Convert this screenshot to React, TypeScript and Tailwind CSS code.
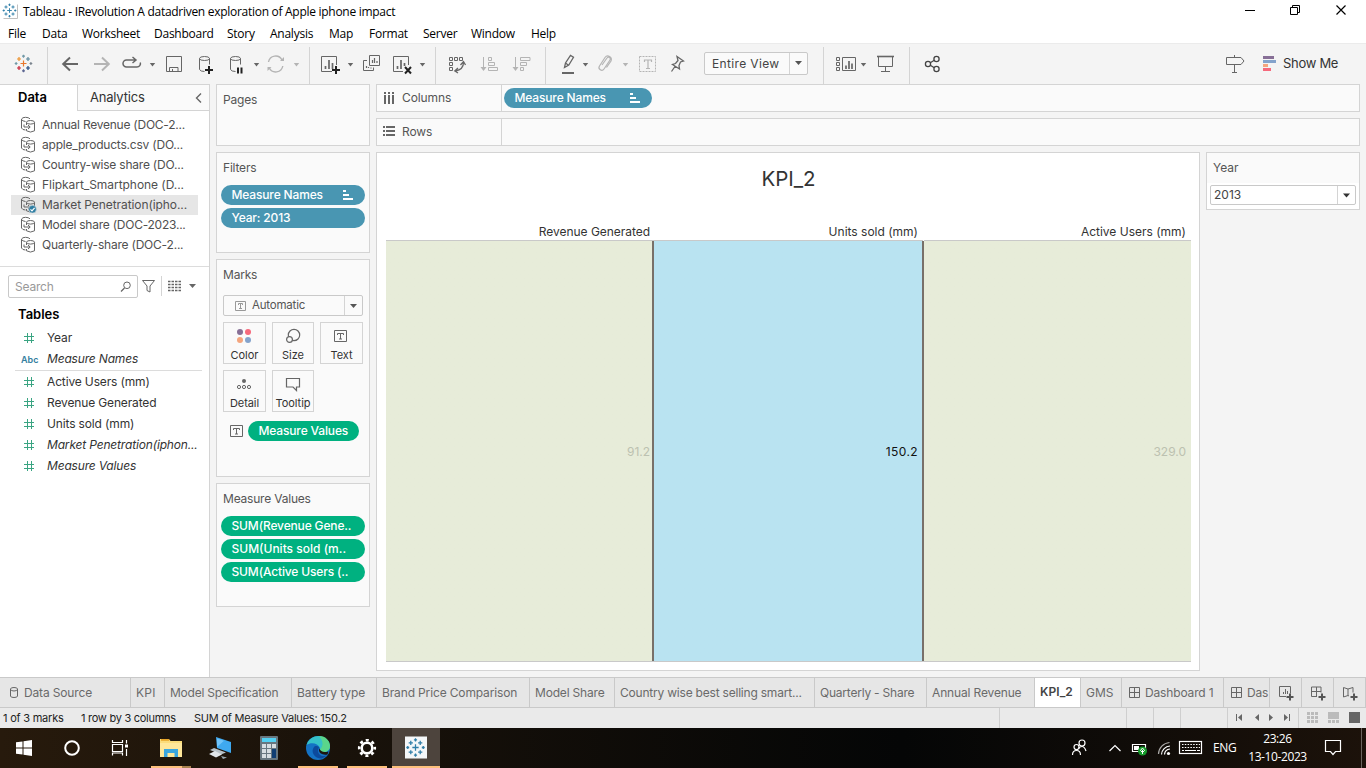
import React from "react";

type IcoProps = { x: number; y: number; w: number; h: number; className?: string; children?: React.ReactNode };

function Ico({ x, y, w, h, className = "", children }: IcoProps) {
  return (
    <svg width={w} height={h} viewBox={`${x} ${y} ${w} ${h}`} fill="none" stroke="#666" strokeWidth="1" className={`block shrink-0 ${className}`}>
      {children}
    </svg>
  );
}

const Sep = () => <div className="w-px h-full shrink-0 bg-[#d4d4d4]" />;
const caret = (x: number, c = "#666") => <path d={`M${x - 2.7} 63h5.4l-2.7 3.4z`} fill={c} stroke="none" />;

function TableauMark({ cx, cy, s, colors }: { cx: number; cy: number; s: number; colors: string[] }) {
  const plus = (x: number, y: number, r: number, c: string, k: number) => (
    <path key={k} d={`M${x - r} ${y}h${2 * r}M${x} ${y - r}v${2 * r}`} stroke={c} strokeWidth={s * 1.2} />
  );
  const u = s;
  return (
    <g>
      {plus(cx, cy, 3 * u, colors[0], 0)}
      {plus(cx - 4.5 * u, cy - 4.5 * u, 2 * u, colors[1], 1)}
      {plus(cx + 4.5 * u, cy - 4.5 * u, 2 * u, colors[2], 2)}
      {plus(cx - 4.5 * u, cy + 4.5 * u, 2 * u, colors[3], 3)}
      {plus(cx + 4.5 * u, cy + 4.5 * u, 2 * u, colors[4], 4)}
      {plus(cx, cy - 7.3 * u, 1.5 * u, colors[5], 5)}
      {plus(cx, cy + 7.3 * u, 1.5 * u, colors[6], 6)}
      {plus(cx - 7.4 * u, cy, 1.4 * u, colors[7], 7)}
      {plus(cx + 7.4 * u, cy, 1.4 * u, colors[8], 8)}
    </g>
  );
}
const blueMark = Array(9).fill("#2f7ea8");

function TitleBar() {
  return (
    <div className="flex h-[23px] items-center font-['Open_Sans',sans-serif] text-[12px] text-black">
      <Ico x={0} y={0} w={23} h={23}>
        <path d="M3.500 18.500h14v-14" stroke="#c0c0c0" />
        <TableauMark cx={9.5} cy={10.5} s={0.78} colors={blueMark} />
      </Ico>
      <span className="flex-1 pt-px tracking-[-0.285px] whitespace-nowrap">Tableau - IRevolution A datadriven exploration of Apple iphone impact</span>
      <Ico x={1228} y={0} w={138} h={23}>
        <g stroke="#000">
          <path d="M1245 10.5h10" />
          <path d="M1290.5 7.5h7v7h-7zM1292.5 7.5v-2h7v7h-2" />
          <path d="M1336.5 5.5l9 9M1345.5 5.5l-9 9" strokeWidth="1.2" />
        </g>
      </Ico>
    </div>
  );
}

const menus: [string, string][] = [
  ["File", "w-[34px]"], ["Data", "w-[40px]"], ["Worksheet", "w-[72px]"], ["Dashboard", "w-[73px]"], ["Story", "w-[43px]"],
  ["Analysis", "w-[59px]"], ["Map", "w-[40px]"], ["Format", "w-[54px]"], ["Server", "w-[48px]"], ["Window", "w-[60px]"], ["Help", "w-[40px]"],
];

function MenuBar() {
  return (
    <div className="flex h-[20px] items-center pt-[2px] pl-[8px] font-['Open_Sans',sans-serif] text-[12px] tracking-[-0.25px] text-black">
      {menus.map(([m, w]) => <span key={m} className={`${w} leading-[18px]`}>{m}</span>)}
    </div>
  );
}

function Toolbar() {
  return (
    <div className="flex h-[41px] w-full border-t border-[#ebebeb] bg-[#f4f4f4]">
      <Ico x={0} y={44} w={47} h={40}>
        <TableauMark cx={23.5} cy={63.5} s={1} colors={["#e8762d", "#eb912c", "#5b879b", "#c72035", "#1f457e", "#7199a6", "#5c6692", "#7199a6", "#7b848e"]} />
      </Ico>
      <div className="mt-[3px]"><Sep /></div>
      <Ico x={48} y={44} w={261} h={40}>
        <path d="M78 64H64M70 57.5L63.2 64L70 70.5" strokeWidth="2" />
        <path d="M94 64h14M102 57.5L108.800 64L102 70.5" strokeWidth="2" stroke="#b4b4b4" />
        <path d="M135 60h-8.500a3.500 3.500 0 0 0 0 7h10.500a3.500 3.500 0 0 0 3.300-4.500M132.500 57l3.500 3l-3.500 3" strokeWidth="1.500" />
        {caret(152.500)}
        <path d="M166.500 56.500h15v15h-15zM169.500 71.500v-4h8.500v4M172.500 71v-2" />
        <ellipse cx="204.500" cy="58.500" rx="5" ry="2" /><path d="M199.500 58.500v11q1 2 5 2M209.500 58.500v6" />
        <path d="M205 70h8M209 66v8" stroke="#222" strokeWidth="2" />
        <ellipse cx="235.500" cy="58.500" rx="5" ry="2" /><path d="M230.500 58.500v11q1 2 5 2M240.500 58.500v6" />
        <path d="M238 67.500v6M241.500 67.500v6" stroke="#222" strokeWidth="2" />
        {caret(256.500)}
        <g stroke="#b4b4b4" strokeWidth="1.400"><path d="M268.500 62a7.200 7.200 0 0 1 13.500-2M282.800 66a7.200 7.200 0 0 1-13.500 2" /><path d="M280 61h4v-4zM271.500 67h-4v4z" fill="#b4b4b4" stroke="none" /></g>
        {caret(296.500, "#b4b4b4")}
      </Ico>
      <div className="mt-[3px]"><Sep /></div>
      <Ico x={310} y={44} w={125} h={40}>
        <path d="M332 71.500h-10.500v-15h15v8.500" />
        <path d="M325.500 66v3M329 60v9M332.500 63v6" strokeWidth="1.700" />
        <path d="M332 70h8M336 66v8" stroke="#222" strokeWidth="2" />
        {caret(350.500)}
        <path d="M369.500 55.500h10v10h-10zM367 60.500h-3.500v10h10v-3" /><path d="M372.500 60v3M374.500 58v5M377 61v2M366.500 66v2M368.500 67v1M371 67.500v1" strokeWidth="1.200" />
        <path d="M403 71.500h-9.500v-15h15v8.500" /><path d="M397.500 66v3M401 60v9M404.500 63v3" strokeWidth="1.700" />
        <path d="M405 67l6 6.500M411 67l-6 6.500" stroke="#222" strokeWidth="2" />
        {caret(422.500)}
      </Ico>
      <div className="mt-[3px]"><Sep /></div>
      <Ico x={436} y={44} w={109} h={40}>
        <path d="M449.500 57.500h3v3h-3zM454.500 57.500h3v3h-3zM459.500 57.500h3v3h-3zM449.500 62.500h3v3h-3zM449.500 67.500h3v3h-3z" />
        <path d="M464 63q0 7-8 8.500M461 65.500l3-3.500l2 3.500M458.500 68.500l-3.200 3l3.200 2" transform="translate(-.5 -.5)" strokeWidth="1.300" />
        <g stroke="#b4b4b4"><path d="M483.500 57v13" /><path d="M480.500 67h6l-3 4z" fill="#b4b4b4" stroke="none" /><path d="M488.500 57.500h3v3h-3zM488.500 62.500h6v3h-6zM488.500 67.500h9v3h-9z" /></g>
        <g stroke="#b4b4b4"><path d="M515.500 57v13" /><path d="M512.500 67h6l-3 4z" fill="#b4b4b4" stroke="none" /><path d="M520.500 57.500h9.500v3h-9.500zM520.500 62.500h6v3h-6zM520.500 67.500h3v3h-3z" /></g>
      </Ico>
      <div className="mt-[3px]"><Sep /></div>
      <Ico x={546} y={44} w={158} h={40}>
        <path d="M564.500 67.500l1-4.500l5-7.500l3 1.800l-4.700 7.700zM565.500 63l3.300 2.500" strokeWidth="1.300" /><path d="M562 73h12" strokeWidth="2" />
        {caret(585.500)}
        <path d="M602 65l5-7a1.800 1.800 0 0 1 3 2l-6 9a2.700 2.700 0 0 1-4.500-3l5.500-8.500a3.500 3.500 0 0 1 6 3.500l-4.500 6.500" stroke="#b4b4b4" strokeWidth="1.200" />
        {caret(625.500, "#b4b4b4")}
        <path d="M639.500 56.500h16v15h-16z" stroke="#b4b4b4" strokeDasharray="2 1" />
        <path d="M644.500 62v-2h7v2M648 60v8M646 68.500h4" stroke="#b4b4b4" strokeWidth="1.200" />
        <path d="M677 56.500l6.500 4.500l-3 1l-1.500 3.500l.5 3.500l-7-4.500l3-1l2.500-3zM675 66.500l-3.500 5" strokeWidth="1.300" />
      </Ico>
      <div className="mt-[8px] flex h-[23px] w-[104px] shrink-0 items-center rounded-[2px] border border-[#c9c9c9] bg-[#fafafa] text-[12px] text-[#444]">
        <span className="w-[84px] pl-[7px] tracking-[0.35px] whitespace-nowrap">Entire View</span>
        <Sep />
        <Ico x={790} y={54} w={17} h={21}><path d="M795 62h7l-3.500 4z" fill="#555" stroke="none" /></Ico>
      </div>
      <Ico x={808} y={44} w={15} h={40} />
      <div className="mt-[3px]"><Sep /></div>
      <Ico x={824} y={44} w={85} h={40}>
        <path d="M836.500 57.500h3v3h-3zM836.500 62.500h3v3h-3zM836.500 67.500h3v3h-3zM842.500 57.500h13v13h-13z" />
        <path d="M846 65.500v3.500M849 61v8M852 63.500v5.500" strokeWidth="1.700" />
        {caret(863.500)}
        <path d="M877 56.500h17" strokeWidth="1.600" /><path d="M878.500 57v9.500h14v-9.500M885.500 66.500v5M881 71.500h9" />
      </Ico>
      <div className="mt-[3px]"><Sep /></div>
      <Ico x={910} y={44} w={366} h={40} className="mr-[7px]">
        <g stroke="#444" strokeWidth="1.300"><circle cx="928" cy="64" r="2.600" /><circle cx="936.500" cy="59" r="2.600" /><circle cx="936.500" cy="69" r="2.600" /><path d="M930.300 62.700l4-2.400M930.300 65.300l4 2.400" /></g>
        <path d="M1226.500 57.500h14.500l3 3.500l-3 3.500h-14.500zM1234.500 55v2.500M1234.500 64.500v8M1232 72.500h5" />
        <g stroke="none"><path d="M1263 56h11v3h-11z" fill="#876f96" /><path d="M1263 60h14v3h-14z" fill="#84a3cc" /><path d="M1263 64h5v3h-5z" fill="#f4a57e" /><path d="M1263 68h8v3h-8z" fill="#f6697c" /></g>
      </Ico>
      <span className="text-[13px] leading-[38px] tracking-[-0.3px] whitespace-nowrap text-[#333]">Show Me</span>
    </div>
  );
}

const sources: [string, string][] = [
  ["Annual Revenue (DOC-2...", "tracking-[-0.24px]"], ["apple_products.csv (DO...", "tracking-[-0.21px]"], ["Country-wise share (DO...", "tracking-[-0.21px]"],
  ["Flipkart_Smartphone (D...", "tracking-[-0.05px]"], ["Market Penetration(ipho...", "tracking-[-0.08px]"], ["Model share (DOC-2023...", "tracking-[-0.24px]"], ["Quarterly-share (DOC-2...", "tracking-[-0.21px]"],
];

function SourceIcon({ on }: { on: boolean }) {
  return (
    <Ico x={0} y={0} w={19} h={20}>
      <path d="M1.500 4v9q1 2 4 2M1.500 4q1-1.700 4-1.700t4.500 1.500M1.500 4.500q1 1.700 4 2" />
      <ellipse cx="10.500" cy="7.300" rx="4" ry="1.800" />
      <path d="M6.500 7.500v2.500M6.500 14v1.800q4 2.500 8 0v-8.300M4 9.500v2.500h6M8 10l2.200 2l-2.200 2" />
      {on && <g><circle cx="12.500" cy="14.200" r="3.900" fill="#2f7ea3" stroke="#e6e6e6" strokeWidth=".6" /><path d="M10.500 14.300l1.500 1.500l2.600-3" stroke="#fff" strokeWidth="1.200" /></g>}
    </Ico>
  );
}

const Hash = () => (
  <Ico x={0} y={0} w={27} h={16}><path d="M7.500 3v10M11.500 3v10M4 6.500h10M4 10.500h10" stroke="#3aa482" /></Ico>
);

function Field({ name, italic = false, abc = false }: { name: string; italic?: boolean; abc?: boolean }) {
  return (
    <div className="flex h-[21px] items-center pl-[20px]">
      {abc ? <span className="w-[27px] pl-[1px] pt-[2px] text-[9px] font-semibold text-[#35809f]">Abc</span> : <Hash />}
      <span className={italic ? "tracking-[-0.17px] whitespace-nowrap italic" : "tracking-[-0.14px] whitespace-nowrap"}>{name}</span>
    </div>
  );
}

function DataPane() {
  return (
    <div className="flex w-[210px] shrink-0 flex-col border-t border-r border-[#d4d4d4] bg-white text-[12px] text-[#333]">
      <div className="flex h-[26px] text-[13px]">
        <div className="w-[77px] pl-[18px] leading-[25px] font-semibold text-black">Data</div>
        <div className="flex flex-1 items-center border-b border-l border-[#d4d4d4] bg-[#fafafa]">
          <span className="flex-1 pl-[12px] tracking-[-0.2px]">Analytics</span>
          <Ico x={190} y={87} w={19} h={20}><path d="M201 92.500l-4.500 4.500l4.500 4.500" strokeWidth="1.400" /></Ico>
        </div>
      </div>
      <div className="h-[156px] border-b border-[#dcdcdc] pt-[4px] pr-[11px] pl-[11px] text-[#505050]">
        {sources.map(([s, tracking], i) => (
          <div key={s} className={`flex h-[20px] items-center pl-[9px] ${i === 4 ? "bg-[#e6e6e6]" : ""}`}>
            <SourceIcon on={i === 4} />
            <span className={`pl-[3px] whitespace-nowrap ${tracking}`}>{s}</span>
          </div>
        ))}
      </div>
      <div className="mt-[8px] flex h-[23px] items-center pl-[8px]">
        <div className="flex h-[23px] w-[130px] items-center rounded-[2px] border border-[#c9c9c9] text-[#999]">
          <span className="flex-1 pl-[6px] tracking-[-0.2px]">Search</span>
          <Ico x={119} y={277} w={18} h={20}><circle cx="127" cy="285.300" r="3.300" /><path d="M124.500 288l-3.500 3.500" strokeWidth="1.300" /></Ico>
        </div>
        <Ico x={138} y={276} w={70} h={22}>
          <path d="M142.500 280.500h12l-4.500 5.500v6l-3-1.500v-4.500z" />
          <path d="M161.500 276v20" stroke="#d4d4d4" />
          <path d="M168 281.500h13M168 284.500h13M168 287.500h13M168 290.500h13" strokeWidth="1.300" strokeDasharray="2.500 1" />
          <path d="M189 284h7l-3.500 4z" fill="#666" stroke="none" />
        </Ico>
      </div>
      <div className="mt-[6px] pl-[18px] text-[13px] leading-[20px] font-semibold text-black">Tables</div>
      <div className="pt-[3px]">
        <Field name="Year" />
        <Field name="Measure Names" italic abc />
        <div className="mr-[7px] ml-[15px] mt-px h-px bg-[#dcdcdc]" />
        <Field name="Active Users (mm)" />
        <Field name="Revenue Generated" />
        <Field name="Units sold (mm)" />
        <Field name="Market Penetration(iphon..." italic />
        <Field name="Measure Values" italic />
      </div>
    </div>
  );
}

function Pill({ text, green = false, sorted = false, tight = true, className = "w-[144px]" }: { text: string; green?: boolean; sorted?: boolean; tight?: boolean; className?: string }) {
  return (
    <div className={`flex h-[20px] shrink-0 items-center rounded-full pl-[10.500px] text-[12px] font-medium text-white ${green ? "bg-[#00b180]" : "bg-[#4996b2]"} ${className}`}>
      <span className={`flex-1 whitespace-nowrap ${tight ? "tracking-[-0.15px]" : ""}`}>{text}</span>
      {sorted && <Ico x={0} y={0} w={24} h={20}><path d="M2 6h3M2 10h6M2 14h10" stroke="#fff" strokeWidth="2" /></Ico>}
    </div>
  );
}

function Card({ title, className, children }: { title: string; className: string; children?: React.ReactNode }) {
  return (
    <div className={`border border-[#d4d4d4] bg-[#fafafa] text-[12px] text-[#555] ${className}`}>
      <div className="h-[30px] pl-[6px] leading-[30px] tracking-[-0.2px] whitespace-nowrap">{title}</div>
      {children}
    </div>
  );
}

const TBox = ({ c = "#666" }: { c?: string }) => (
  <Ico x={0} y={0} w={13} h={12}><path d="M.5 .5h12v11h-12z" stroke={c} /><path d="M3.500 5v-1.500h6v1.500M6.500 3.500v5.500M5 9h3" stroke={c} /></Ico>
);

function MarkButton({ label, className, children }: { label: string; className: string; children: React.ReactNode }) {
  return (
    <div className={`flex h-[42px] flex-col items-center border border-[#d4d4d4] bg-[#fafafa] text-[11px] text-[#333] ${className}`}>
      <div className="flex h-[26px] items-center">{children}</div>
      <span className="leading-[13px] tracking-[-0.05px]">{label}</span>
    </div>
  );
}

function Cards() {
  return (
    <div className="ml-[6px] flex w-[154px] shrink-0 flex-col gap-[6px]">
      <Card title="Pages" className="h-[62px]" />
      <Card title="Filters" className="h-[101px]">
        <div className="flex flex-col gap-[3px] px-[4px] pt-[2px]"><Pill text="Measure Names" sorted /><Pill text="Year: 2013" /></div>
      </Card>
      <Card title="Marks" className="h-[218px]">
        <div className="mx-[6px] mt-[5px] flex h-[21px] items-center rounded-[2px] border border-[#c9c9c9] text-[11.500px]">
          <div className="flex w-[120px] items-center gap-[6px] pl-[11px]">
            <Ico x={0} y={0} w={11} h={12}><path d="M.5 1.500h10v9h-10z" stroke="#999" /><path d="M3.500 5v-1.500h4v1.500M5.500 3.500v5M4 8.500h3" stroke="#999" /></Ico>
            <span className="pt-px tracking-[-0.2px]">Automatic</span>
          </div>
          <Sep />
          <Ico x={345} y={296} w={17} h={19}><path d="M350 304h7l-3.500 4z" fill="#555" stroke="none" /></Ico>
        </div>
        <div className="mt-[6px] flex flex-wrap gap-y-[6px] pl-[6px]">
          <MarkButton label="Color" className="mr-[6px] w-[43px]">
            <Ico x={0} y={0} w={17} h={16}><g stroke="none"><circle cx="4" cy="4" r="3" fill="#876f96" /><circle cx="12" cy="4" r="3" fill="#f6697c" /><circle cx="4" cy="12" r="3" fill="#f4a57e" /><circle cx="12" cy="12" r="3" fill="#84a3cc" /></g></Ico>
          </MarkButton>
          <MarkButton label="Size" className="mr-[6px] w-[42px]">
            <Ico x={0} y={0} w={16} h={16}><circle cx="9" cy="7" r="5.700" strokeWidth="1.200" /><circle cx="4.500" cy="11.500" r="2.900" fill="#fafafa" strokeWidth="1.200" /></Ico>
          </MarkButton>
          <MarkButton label="Text" className="mr-[5px] w-[43px]"><div className="pr-[2px]"><TBox /></div></MarkButton>
          <MarkButton label="Detail" className="mr-[6px] w-[43px]">
            <Ico x={0} y={0} w={17} h={16}><circle cx="8" cy="5" r="2" fill="#666" stroke="none" /><circle cx="3" cy="11" r="1.600" /><circle cx="8" cy="11" r="1.600" /><circle cx="13" cy="11" r="1.600" /></Ico>
          </MarkButton>
          <MarkButton label="Tooltip" className="w-[42px]">
            <Ico x={0} y={0} w={16} h={16}><path d="M1.500 2.500h13v8.500h-3v3.500l-3.500-3.500h-6.500z" strokeWidth="1.200" /></Ico>
          </MarkButton>
        </div>
        <div className="mt-[9px] flex items-center gap-[5px] pl-[13px]"><TBox /><Pill text="Measure Values" green className="w-[111px]" /></div>
      </Card>
      <Card title="Measure Values" className="h-[124px]">
        <div className="flex flex-col gap-[3px] px-[4px] pt-[2px]"><Pill green text="SUM(Revenue Gene.." /><Pill green tight={false} text="SUM(Units sold (m.." /><Pill green text="SUM(Active Users (.." /></div>
      </Card>
    </div>
  );
}

function Shelf({ label, icon, children }: { label: string; icon: React.ReactNode; children?: React.ReactNode }) {
  return (
    <div className="flex h-[28px] shrink-0 items-center border border-[#d4d4d4] bg-[#fafafa] text-[12px] text-[#555]">
      <div className="flex w-[124px] items-center pl-[6px]">{icon}<span className="pl-[6px] tracking-[-0.1px]">{label}</span></div>
      <Sep />
      {children}
    </div>
  );
}

function Pane({ title, value, className }: { title: string; value: string; className: string }) {
  return (
    <div className={`flex flex-col text-right ${className}`}>
      <div className="h-[18px] leading-[20px] text-[#333]">{title}</div>
      <div className="-mr-[5px] h-px bg-[#c9c9c9]" />
      <div className="flex-1 pt-[201px] leading-[20px]">{value}</div>
    </div>
  );
}

function Worksheet() {
  return (
    <div className="mt-[6px] flex h-[519px] w-[824px] flex-col border border-[#d4d4d4] bg-white pl-[9px] text-[12px]">
      <div className="h-[69px] pt-[9px] pr-[8px] text-center text-[20.500px] leading-[33px] text-[#333]">KPI_2</div>
      <div className="grid h-[440px] w-[805px] grid-cols-[266px_2px_268px_2px_267px] overflow-hidden border-b border-[#c9c9c9]">
        <Pane title="Revenue Generated" value="91.2" className="bg-linear-to-b from-white from-[18px] to-[#e7ecd9] to-[18px] pr-[2px] tracking-[-0.04px] text-[#bcc1b0]" />
        <div className="mt-[19px] bg-[#787069]" />
        <Pane title="Units sold (mm)" value="150.2" className="bg-linear-to-b from-white from-[18px] to-[#b9e3f1] to-[18px] pr-[4px] text-[#111] [&>div:last-child]:tracking-[0.4px]" />
        <div className="mt-[19px] bg-[#787069]" />
        <Pane title="Active Users (mm)" value="329.0" className="bg-linear-to-b from-white from-[18px] to-[#e7ecd9] to-[18px] pr-[5px] text-[#bcc1b0]" />
      </div>
    </div>
  );
}

function Main() {
  return (
    <div className="flex h-[593px] bg-[#f4f4f4]">
      <DataPane />
      <Cards />
      <div className="ml-[6px] flex w-[984px] flex-col">
        <Shelf label="Columns" icon={<Ico x={0} y={0} w={13} h={14}><path d="M2 1v2M6 1v2M10 1v2M2 4v9M6 4v9M10 4v9" strokeWidth="2" /></Ico>}>
          <Pill text="Measure Names" sorted className="ml-[2px] w-[148px]" />
        </Shelf>
        <div className="h-[6px] shrink-0" />
        <Shelf label="Rows" icon={<Ico x={0} y={0} w={13} h={14}><path d="M0 2h2M0 6h2M0 10h2M3 2h9M3 6h9M3 10h9" strokeWidth="2" /></Ico>} />
        <div className="flex justify-between">
          <Worksheet />
          <div className="mt-[6px] h-[58px] w-[154px] border border-[#d4d4d4] bg-white text-[12px] text-[#555]">
            <div className="h-[30px] bg-[#fafafa] pl-[6px] leading-[30px]">Year</div>
            <div className="mx-[3px] mt-[2px] flex h-[20px] items-center rounded-[2px] border border-[#c9c9c9] text-[#444]">
              <span className="w-[127px] pl-[3px]">2013</span>
              <Sep />
              <Ico x={0} y={0} w={17} h={18}><path d="M5 7.500h7l-3.500 4z" fill="#333" stroke="none" /></Ico>
            </div>
          </div>
        </div>
      </div>
    </div>
  );
}

const sheets: [string, string][] = [
  ["KPI", "w-[34px] tracking-[0.2px]"], ["Model Specification", "w-[127px] tracking-[-0.22px]"], ["Battery type", "w-[85px] tracking-[-0.08px]"], ["Brand Price Comparison", "w-[153px] tracking-[-0.14px]"],
  ["Model Share", "w-[85px] tracking-[-0.18px]"], ["Country wise best selling smart...", "w-[200px] tracking-[-0.21px]"], ["Quarterly - Share", "w-[112px] tracking-[-0.22px]"],
  ["Annual Revenue", "w-[108px] tracking-[-0.15px]"], ["KPI_2", "w-[46px] bg-white font-semibold leading-[27px] text-[#444]"], ["GMS", "w-[41px]"],
];
const Dash = () => <Ico x={0} y={0} w={11} h={12}><path d="M.5 .5h10v10h-10zM5.500 .5v10M.5 5.500h10" /></Ico>;

function SheetTabs() {
  return (
    <div className="flex h-[31px] border-t border-b border-[#c9c9c9] bg-[#e6e6e6] text-[12px] leading-[29px] text-[#6a6a6a]">
      <div className="flex w-[131px] items-center border-r border-[#c9c9c9] pl-[9px]">
        <Ico x={0} y={0} w={10} h={14}><path d="M1.500 3q0-1.500 3.500-1.500t3.500 1.500v7q0 1.500-3.500 1.500t-3.500-1.500zM1.500 3.500q1 1.500 3.500 1.500t3.500-1.500" /></Ico>
        <span className="pl-[5px] tracking-[-0.15px]">Data Source</span>
      </div>
      {sheets.map(([s, style]) => (
        <div key={s} className={`shrink-0 overflow-hidden border-r border-[#c9c9c9] pl-[5px] whitespace-nowrap ${style}`}>{s}</div>
      ))}
      <div className="flex w-[102px] shrink-0 items-center gap-[5px] border-r border-[#c9c9c9] pl-[7px]"><Dash /><span className="tracking-[-0.15px] whitespace-nowrap">Dashboard 1</span></div>
      <div className="flex w-[46px] shrink-0 items-center gap-[5px] overflow-hidden border-r border-[#c9c9c9] pl-[7px]"><Dash /><span className="tracking-[-0.15px]">Das</span></div>
      <Ico x={1270} y={678} w={96} h={29}>
        <path d="M1301.500 678v29M1333.500 678v29M1365.500 678v29" stroke="#c9c9c9" />
        <path d="M1286 696.500h-6.500v-10h11v7M1283.500 692v2M1285.500 689v5M1287.500 691v3" />
        <path d="M1317 696.500h-5.500v-9.500h9.500v5.500M1316.500 687v9.500M1311.500 691.500h9.500" />
        <path d="M1349 696l-1-.5l-4.500 1.500v-9.500l4.500 1.500l5-1.500v5M1348 689v6.500" />
        <path d="M1286.500 697h7M1290 693.500v7M1318.500 697h7M1322 693.500v7M1350.500 697h7M1354 693.500v7" stroke="#555" strokeWidth="2" />
      </Ico>
    </div>
  );
}

function StatusBar() {
  return (
    <div className="flex h-[20px] bg-[#eaeaea] pl-[3px] text-[11px] leading-[20px] tracking-[-0.22px] text-[#222]">
      <span className="w-[78px] whitespace-nowrap">1 of 3 marks</span>
      <span className="w-[113px] tracking-[-0.27px] whitespace-nowrap">1 row by 3 columns</span>
      <span className="flex-1">SUM of Measure Values: 150.2</span>
      <Ico x={990} y={708} w={376} h={20}>
        <path d="M999.500 708v20M1126.500 708v20M1153.500 708v20M1180.500 708v20M1227.500 708v20M1298.500 708v20" stroke="#cfcfcf" />
        <g fill="#666" stroke="none">
          <path d="M1236 714h1v7h-1zM1242 714v7l-4-3.500zM1259 714v7l-4-3.500zM1269 714v7l4-3.500zM1284 714v7l4-3.500zM1289 714h1v7h-1z" />
          <path d="M1349 712h11v11h-11z" />
          {[0, 1, 2].map((r) => [0, 1, 2].map((c) => <rect key={`${r}${c}`} x={1307 + c * 4} y={712 + r * 4} width="3" height="3" fill="#bbb" />))}
          <path d="M1328 712h11v7h-11zM1328 720h3v3h-3zM1332 720h3v3h-3zM1336 720h3v3h-3z" fill="#bbb" />
        </g>
      </Ico>
    </div>
  );
}

function Taskbar() {
  return (
    <div className="flex h-[40px] bg-linear-to-r from-[#271a0c] via-[#050606] via-66% to-[#1c120a] font-['Open_Sans',sans-serif] text-[12px] text-white">
      <Ico x={0} y={728} w={1060} h={40}>
        <path d="M392 728h48v40h-48z" fill="#4d443d" stroke="none" />
        <path d="M16 742.300l6.500-.9v6.100h-6.500zM23.500 741.200l8.500-1.200v7.500h-8.500zM16 748.500h6.500v6.100l-6.500-.9zM23.500 748.500h8.500v7.500l-8.500-1.200z" fill="#fff" stroke="none" />
        <circle cx="72" cy="748" r="6.800" stroke="#fff" strokeWidth="2" />
        <g stroke="#fff" strokeWidth="1.200"><path d="M112.500 744.500h10v7h-10zM112.500 740v2.500h10v-2.500M112.500 755.500v-2.500h10v2.500M126.500 740v3.500M126.500 749v7" /><path d="M125 744.500h3v3h-3z" fill="#fff" stroke="none" /></g>
        <g stroke="none">
          <path d="M160 739h9l1.500 2h11.500v16h-22z" fill="#fbdc7b" /><path d="M161 739h8v1.800h-8z" fill="#e9a72b" /><path d="M160 743h22v14h-22z" fill="#ffe79a" /><path d="M164 749h14v8h-3.500v-4h-7v4h-3.500z" fill="#3aa6df" />
          <path d="M216 737l15 5v11l-14-5z" fill="#3fa9f0" /><path d="M217 738.500l7 2.300l-7 6.200z" fill="#70c4fa" /><path d="M214 748l12 4.500l-5 2l-11-4.500z" fill="#b8c2c8" /><path d="M209 754l6-3l7 3.500l-6 3z" fill="#e1e6ea" /><path d="M221 756l6 1.500l-4 1.500z" fill="#9aa7ae" />
          <rect x="260" y="736" width="18" height="24" rx="1" fill="#687780" /><path d="M262 738h14v4h-14z" fill="#53d0f2" /><path d="M262 744h4v4h-4zM267 744h4v4h-4zM272 744h4v4h-4zM262 749h4v4h-4zM267 749h4v4h-4zM262 754h4v4h-4zM267 754h4v4h-4z" fill="#d6dde1" /><path d="M272 749h4v9h-4z" fill="#103e73" />
          <circle cx="318" cy="748" r="12" fill="#1472c4" /><path d="M306.500 745c2-6 7-9 12-9c7 0 11.500 5 11.500 10c0 4-3 6-6.500 6c-4 0-3.500-2-3.500-4c-2-5-9-6-13.500-3z" fill="#35c1c9" /><path d="M319 736c7 0 11 5 11 10c0 4-3 6-6.500 6c-3 0-3.800-1-3.500-2.500c4-4 3-9-1-13.500z" fill="#67dc76" opacity=".75" /><path d="M314 747c-4 5 1 12 8 11.500l5-3c-5 1.500-9-.5-9-5c0-1 .5-2 1-3c-1-2-4-2-5-.5z" fill="#0c4a9c" />
          <path d="M319.500 748.500c1 3 4 4.500 9 3l-1 3c-5 1-9-1.500-8.500-5z" fill="#1d1610" />
        </g>
        <circle cx="367" cy="748" r="5.300" stroke="#fff" strokeWidth="2.600" /><circle cx="367" cy="748" r="7.800" stroke="#fff" strokeWidth="2.600" strokeDasharray="3 3.126" strokeDashoffset="1.500" />
        <rect x="405" y="736.500" width="22" height="22" fill="#f4f7f9" stroke="none" /><TableauMark cx={415.500} cy={747.500} s={1.050} colors={blueMark} />
        <path d="M151 766h31v2h-31zM298 766h40v2h-40zM347 766h40v2h-40zM392 766h48v2h-48z" fill="#fdc07c" stroke="none" /><path d="M182 766h9v2h-9z" fill="#a9824f" stroke="none" />
      </Ico>
      <Ico x={1060} y={728} w={150} h={40}>
        <g stroke="#fff" strokeWidth="1.200">
          <circle cx="1076.500" cy="747" r="2.500" /><path d="M1072.500 755q0-4.500 4-4.500t4 4.500" /><circle cx="1082" cy="743" r="3" /><path d="M1078.500 749q1-2.500 3.500-2.500t4 4.500" />
          <path d="M1109.500 751l5.500-5.500l5.500 5.500" />
          <path d="M1132.500 744.500h13v7h-13z" /><path d="M1134 746h5v4h-5z" fill="#fff" stroke="none" /><circle cx="1142.500" cy="751" r="4.500" fill="#169b2b" stroke="none" /><path d="M1142.500 748l2 2.500l-2 2l-2-2zM1142.500 750v4" strokeWidth="1" />
          <path d="M1158.500 754a12 12 0 0 1 11-11.500" opacity=".65" /><path d="M1161.500 754.500a9 9 0 0 1 8.500-8.500M1164.500 754.500a6 6 0 0 1 5.500-5.500" /><circle cx="1168.500" cy="753.500" r="1.600" fill="#fff" stroke="none" />
          <rect x="1179.500" y="741.500" width="22" height="12" /><path d="M1182 744.500h18M1182 747.500h18" strokeDasharray="1.500 1.300" /><path d="M1182 750.500h2M1185 750.500h11M1197 750.500h3" />
        </g>
      </Ico>
      <span className="w-[35px] pl-[3px] leading-[39px] tracking-[-0.4px]">ENG</span>
      <div className="w-[65px] pt-[2px] text-center text-[12px] leading-[18px] tracking-[-0.4px] whitespace-nowrap"><div>23:26</div><div>13-10-2023</div></div>
      <Ico x={1310} y={728} w={56} h={40}><path d="M1325.500 740.500h15v11h-5l-2.500 3l-2.500-3h-5z" stroke="#fff" strokeWidth="1.200" /><path d="M1361.500 728v40" stroke="#6a645e" /></Ico>
    </div>
  );
}

export default function App() {
  return (
    <div className="flex h-[768px] w-[1366px] flex-col overflow-hidden bg-white font-[Inter,sans-serif]">
      <TitleBar />
      <MenuBar />
      <Toolbar />
      <Main />
      <SheetTabs />
      <StatusBar />
      <Taskbar />
    </div>
  );
}
